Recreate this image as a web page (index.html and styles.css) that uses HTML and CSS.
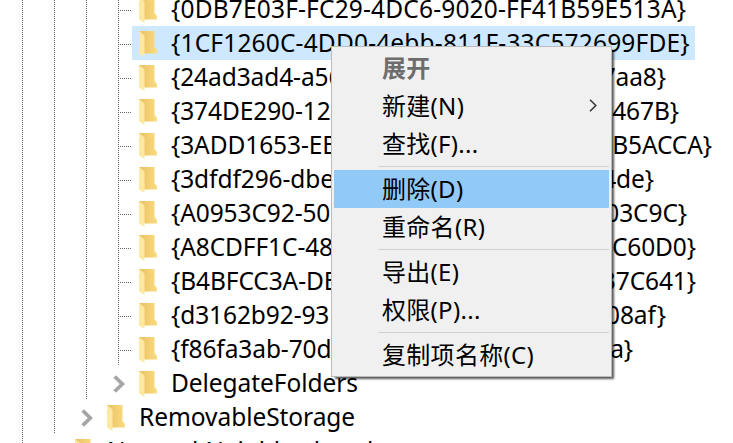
FILE: index.html
```html
<!DOCTYPE html>
<html lang="zh-CN">
<head>
<meta charset="utf-8">
<title>注册表编辑器</title>
<link rel="stylesheet" href="styles.css">
</head>
<body>
<svg class="defs" width="0" height="0">
  <defs>
    <linearGradient id="back"><stop offset="0" stop-color="#e9c063"/><stop offset="1" stop-color="#fadc80"/></linearGradient>
    <symbol id="folder" viewBox="0 0 20 28">
      <path d="M1 1H16.5V17L19 20V23.500H5Z" fill="url(#back)"/>
      <path d="M1 1L6.500 5.500V27L1 23.500Z" fill="#ffe9a2"/>
    </symbol>
    <symbol id="chevron" viewBox="0 0 12 18"><path d="M1.700 1.500L9.300 9L1.700 16.500" fill="none" stroke="#a6a6a6" stroke-width="3.800"/></symbol>
  </defs>
</svg>
<main class="tree">
  <div class="row leaf"><i class="guides"></i><i class="branch"></i><div class="item"><svg class="folder"><use href="#folder"/></svg><span class="key">{0DB7E03F-FC29-4DC6-9020-FF41B59E513A}</span></div></div>
  <div class="row leaf"><i class="guides"></i><i class="branch"></i><div class="item selected"><svg class="folder"><use href="#folder"/></svg><span class="key">{1CF1260C-4DD0-4ebb-811F-33C572699FDE}</span></div></div>
  <div class="row leaf"><i class="guides"></i><i class="branch"></i><div class="item"><svg class="folder"><use href="#folder"/></svg><span class="key split w3"><span>{24ad3ad4-a56</span><span>7aa8}</span></span></div></div>
  <div class="row leaf"><i class="guides"></i><i class="branch"></i><div class="item"><svg class="folder"><use href="#folder"/></svg><span class="key split w4"><span>{374DE290-12</span><span>E467B}</span></span></div></div>
  <div class="row leaf"><i class="guides"></i><i class="branch"></i><div class="item"><svg class="folder"><use href="#folder"/></svg><span class="key split w5"><span>{3ADD1653-EB</span><span>B5ACCA}</span></span></div></div>
  <div class="row leaf"><i class="guides"></i><i class="branch"></i><div class="item"><svg class="folder"><use href="#folder"/></svg><span class="key split w6"><span>{3dfdf296-dbe</span><span>4de}</span></span></div></div>
  <div class="row leaf"><i class="guides"></i><i class="branch"></i><div class="item"><svg class="folder"><use href="#folder"/></svg><span class="key split w7"><span>{A0953C92-50</span><span>03C9C}</span></span></div></div>
  <div class="row leaf"><i class="guides"></i><i class="branch"></i><div class="item"><svg class="folder"><use href="#folder"/></svg><span class="key split w8"><span>{A8CDFF1C-48</span><span>C60D0}</span></span></div></div>
  <div class="row leaf"><i class="guides"></i><i class="branch"></i><div class="item"><svg class="folder"><use href="#folder"/></svg><span class="key split w8"><span>{B4BFCC3A-DB</span><span>37C641}</span></span></div></div>
  <div class="row leaf"><i class="guides"></i><i class="branch"></i><div class="item"><svg class="folder"><use href="#folder"/></svg><span class="key split w3"><span>{d3162b92-93</span><span>08af}</span></span></div></div>
  <div class="row leaf"><i class="guides"></i><i class="branch"></i><div class="item"><svg class="folder"><use href="#folder"/></svg><span class="key split w11"><span>{f86fa3ab-70d</span><span>a}</span></span></div></div>
  <div class="row parent"><i class="guides"></i><svg class="chevron"><use href="#chevron"/></svg><div class="item"><svg class="folder"><use href="#folder"/></svg><span class="key name">DelegateFolders</span></div></div>
  <div class="row storage"><i class="guides"></i><svg class="chevron"><use href="#chevron"/></svg><div class="item"><svg class="folder"><use href="#folder"/></svg><span class="key name">RemovableStorage</span></div></div>
  <div class="row network"><i class="guides"></i><div class="item"><svg class="folder"><use href="#folder"/></svg><span class="key name">NetworkNeighborhood</span></div></div>
</main>
<nav class="menu">
  <div class="entry disabled">展开</div>
  <div class="entry">新建(N)<svg class="arrow" viewBox="0 0 8 13"><path d="M1 .7L6.800 6.500L1 12.300" fill="none" stroke="#333" stroke-width="1.500"/></svg></div>
  <div class="entry">查找(F)...</div>
  <hr>
  <div class="entry active">删除(D)</div>
  <div class="entry">重命名(R)</div>
  <hr>
  <div class="entry">导出(E)</div>
  <div class="entry">权限(P)...</div>
  <hr>
  <div class="entry">复制项名称(C)</div>
</nav>
</body>
</html>
```
FILE: styles.css
```css
* { box-sizing: border-box; }
body {
  margin: 0;
  height: 443px;
  overflow: hidden;
  background: #fff;
  color: #000;
  font-family: "Noto Sans", "Noto Sans CJK SC", sans-serif;
}
.defs { position: absolute; }
.tree { height: 451px; margin-top: -8px; overflow: hidden; }
.row { display: flex; height: 34px; }
.guides {
  flex: none;
  width: 119px;
  --dot: repeating-linear-gradient(#666 0 1px, transparent 1px 2px);
  background: var(--dot) 22px 0 / 1px 100% no-repeat, var(--dot) 54px 0 / 1px 100% no-repeat,
    var(--dot) 86px 0 / 1px 100% no-repeat, var(--dot) 118px 0 / 1px 100% no-repeat;
}
.branch {
  flex: none;
  width: 13px;
  height: 1px;
  margin-top: 18px;
  background: repeating-linear-gradient(90deg, transparent 0 1px, #666 1px 2px);
}
.item { display: flex; padding: 0 5px 0 6px; height: 34px; }
.selected { background: #cde8ff; }
.folder { flex: none; width: 20px; height: 28px; margin-top: 4px; }
.key {
  margin-left: 13px;
  font-size: 24.5px;
  line-height: 34px;
  letter-spacing: 0.17px;
  white-space: nowrap;
}
.name { letter-spacing: -0.06px; }
.split { display: flex; justify-content: space-between; letter-spacing: -0.1px; }
.w3 { width: 495px; }
.w4 { width: 508px; }
.w5 { width: 541px; }
.w6 { width: 483px; }
.w7 { width: 516px; }
.w8 { width: 525px; }
.w11 { width: 462px; }
.chevron { flex: none; width: 12px; height: 18px; margin-top: 9px; }
.parent .guides {
  width: 113px;
  background: var(--dot) 22px 0 / 1px 100% no-repeat, var(--dot) 54px 0 / 1px 100% no-repeat,
    var(--dot) 86px 0 / 1px 100% no-repeat;
}
.parent .item { padding-left: 13px; }
.storage .guides {
  width: 81px;
  background: var(--dot) 22px 0 / 1px 100% no-repeat, var(--dot) 54px 0 / 1px 100% no-repeat;
}
.storage .item { padding-left: 13px; }
.network .guides {
  width: 68px;
  background: var(--dot) 22px 0 / 1px 100% no-repeat;
}
.menu {
  position: absolute;
  left: 331px;
  top: 46px;
  width: 281px;
  height: 331px;
  padding: 2px;
  border: 1px solid #bbb;
  background: #f0f0f0;
  box-shadow: 3px 3px 2px -1px rgba(0, 0, 0, .65);
  font-size: 24px;
}
.entry {
  display: flex;
  justify-content: space-between;
  align-items: center;
  height: 38px;
  padding: 0 12px 3px 48px;
  letter-spacing: 0.3px;
  white-space: nowrap;
}
.disabled { color: #6d6d6d; font-weight: 700; }
.active { background: #91c9f7; }
.arrow { width: 8px; height: 13px; margin-top: 2px; }
hr { height: 1px; margin: 3px 0 3px 44px; border: 0; background: #d2d2d2; }
```
